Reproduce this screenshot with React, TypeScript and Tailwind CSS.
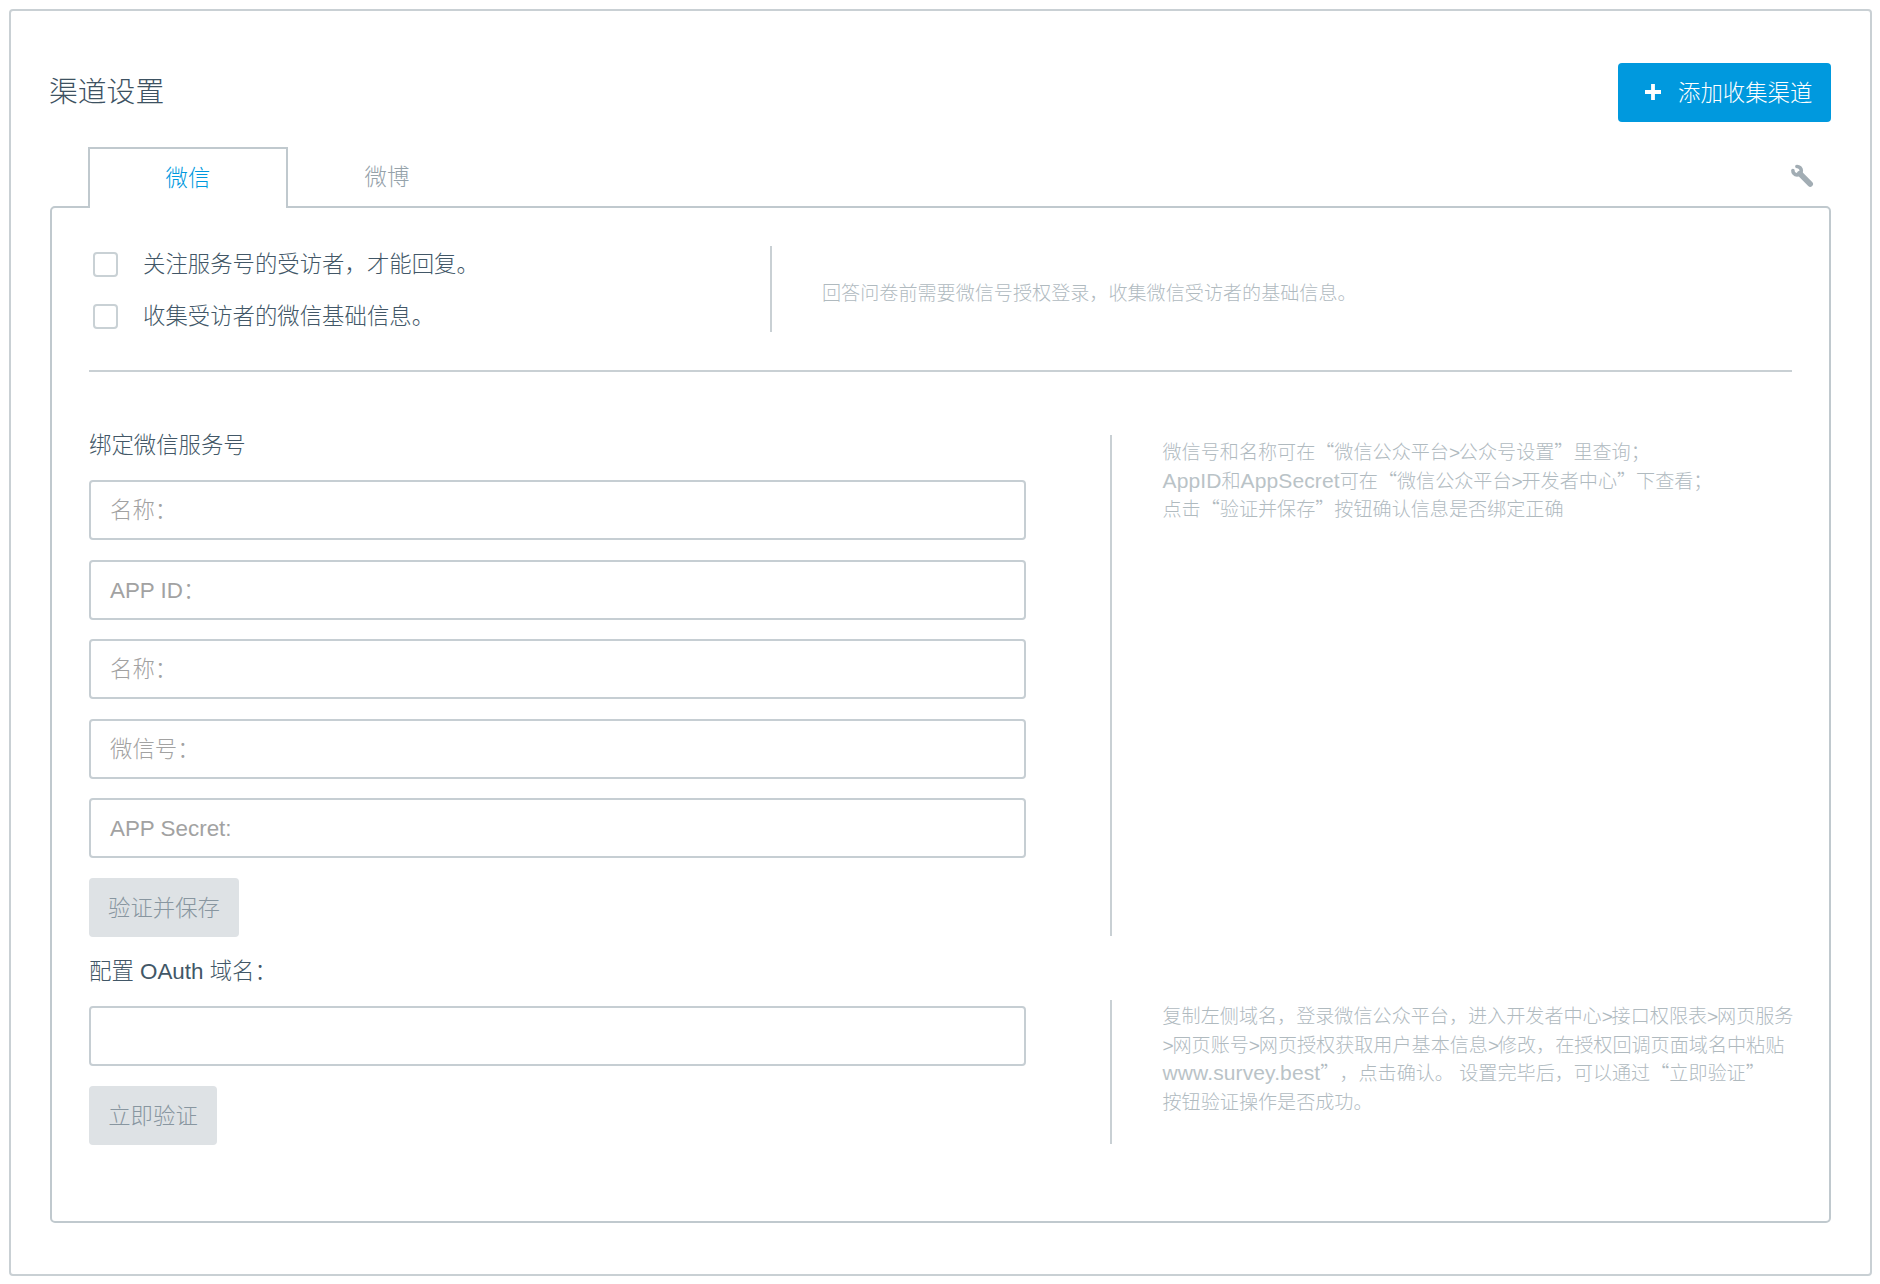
import React from "react";

const T = "whitespace-nowrap text-[22.4px] leading-8";

/* Hint text: Latin runs are a little larger, arrows tighter, and quotes take the full-width CJK form. */
function Note({ text }: { text: string }) {
  return (
    <p className="h-[28.65px] whitespace-nowrap text-[19.1px] leading-[28.65px] text-[#b0babf]">
      {text.split(/([A-Za-z.]+|>|[“”])/).map((part, i) => {
        if (part === ">") return <span key={i} className="-tracking-[1.2px]">{part}</span>;
        if (part === "“" || part === "”") return <span key={i} className="font-['Noto_Sans_CJK_SC',sans-serif] leading-none">{part}</span>;
        if (/^[A-Za-z.]+$/.test(part)) return <span key={i} className="text-[21px] leading-none tracking-[0.12px] text-[#bac3c7]">{part}</span>;
        return part;
      })}
    </p>
  );
}

function Check({ label }: { label: string }) {
  return (
    <label className="flex h-[26px] items-center gap-[25px] text-[#425767]">
      <span className="ml-[4px] h-[25px] w-[25px] rounded-[4px] border-2 border-[#c9d1d5]" />
      <span className={`${T} pt-px`}>{label}</span>
    </label>
  );
}

function Field({ label }: { label?: string }) {
  return (
    <div className="flex h-[60px] w-[937px] items-center rounded-[4px] border-2 border-[#c6ced3] pl-[19px] text-[#a2a2a2]">
      <span className={`${T} pt-[2px]`}>{label}</span>
    </div>
  );
}

function Save({ label, className }: { label: string; className: string }) {
  return (
    <button className={`${T} h-[59px] rounded-[4px] bg-[#dee2e5] pt-[3px] text-[#8896a0] ${className}`}>{label}</button>
  );
}

function Wrench() {
  return (
    <svg className="mt-4 mr-[17px] ml-auto h-6 w-6 text-[#a2adb4]" viewBox="0 0 24 24" fill="none" stroke="currentColor" strokeLinecap="round">
      <path d="M6.9 3.5A4.2 4.2 0 1 1 2.9 7.5" strokeWidth="3.6" />
      <path d="M9.8 10.6 20.2 21" strokeWidth="5.6" />
    </svg>
  );
}

export default function App() {
  return (
    <div className="h-[1284px] w-[1880px] bg-white p-[9px] pr-2 pb-2 font-['Liberation_Sans','Noto_Sans_CJK_SC',sans-serif] font-light [text-spacing-trim:space-all]">
      <main className="h-[1267px] rounded-[4px] border-2 border-[#c9d0d4] pr-[39px] pl-[39px]">
        <header className="flex h-[136px] items-start justify-between">
          <h1 className="mt-[62px] -ml-px text-[28.8px] leading-[38px] text-[#3d5262]">渠道设置</h1>
          <button className="mt-[52px] flex h-[59px] w-[213px] items-center rounded-[4px] bg-[#0099de] pl-[27px] text-white">
            <svg className="-mt-px" width="16" height="16" viewBox="0 0 16 16" fill="currentColor">
              <path d="M6.1 0h3.8v6.1H16v3.8H9.9V16H6.1V9.9H0V6.1h6.1z" />
            </svg>
            <span className={`${T} ml-[17px] pt-[2px]`}>添加收集渠道</span>
          </button>
        </header>

        <nav className="relative z-10 -mb-[2px] flex h-[61px] pl-[38px]">
          <div className="flex w-[200px] items-center justify-center border-2 border-b-0 border-[#c0c9ce] bg-white text-[#0099de]">
            <span className={T}>微信</span>
          </div>
          <div className="flex w-[198px] items-center justify-center text-[#95a2aa]">
            <span className={T}>微博</span>
          </div>
          <Wrench />
        </nav>

        <section className="h-[1017px] rounded-[5px] border-2 border-[#c0c9ce] px-[37px] pt-[38px]">
          <div className="flex h-[126px] border-b-2 border-[#c9d0d4]">
            <div className="flex w-[681px] shrink-0 flex-col gap-[26.5px] pt-[5px]">
              <Check label="关注服务号的受访者，才能回复。" />
              <Check label="收集受访者的微信基础信息。" />
            </div>
            <div className="flex h-[86px] items-center border-l-2 border-[#c9d0d4] pt-[10px] pl-[50px]">
              <Note text="回答问卷前需要微信号授权登录，收集微信受访者的基础信息。" />
            </div>
          </div>

          <div className="mt-[63px] flex h-[501px]">
            <div className="flex w-[1021px] shrink-0 flex-col">
              <h2 className={`${T} -mt-[5px] mb-[18px] text-[#425767]`}>绑定微信服务号</h2>
              <div className="flex flex-col gap-[19.5px]">
                <Field label="名称：" />
                <Field label="APP ID：" />
                <Field label="名称：" />
                <Field label="微信号：" />
                <Field label="APP Secret:" />
                <Save label="验证并保存" className="w-[150px]" />
              </div>
            </div>
            <div className="border-l-2 border-[#c9d0d4] pt-[4px] pl-[50.5px]">
              <Note text="微信号和名称可在“微信公众平台>公众号设置”里查询；" />
              <Note text="AppID和AppSecret可在“微信公众平台>开发者中心”下查看；" />
              <Note text="点击“验证并保存”按钮确认信息是否绑定正确" />
            </div>
          </div>

          <div className="mt-[20px] flex">
            <div className="flex w-[1021px] shrink-0 flex-col">
              <h2 className={`${T} mb-[18px] text-[#425767]`}>配置 OAuth 域名：</h2>
              <Field />
              <Save label="立即验证" className="mt-[20px] w-[128px]" />
            </div>
            <div className="mt-[44px] h-[144px] border-l-2 border-[#c9d0d4] pt-[3px] pl-[50.5px]">
              <Note text="复制左侧域名，登录微信公众平台，进入开发者中心>接口权限表>网页服务" />
              <Note text=">网页账号>网页授权获取用户基本信息>修改，在授权回调页面域名中粘贴" />
              <Note text="www.survey.best”，点击确认。 设置完毕后，可以通过“立即验证”" />
              <Note text="按钮验证操作是否成功。" />
            </div>
          </div>
        </section>
      </main>
    </div>
  );
}
